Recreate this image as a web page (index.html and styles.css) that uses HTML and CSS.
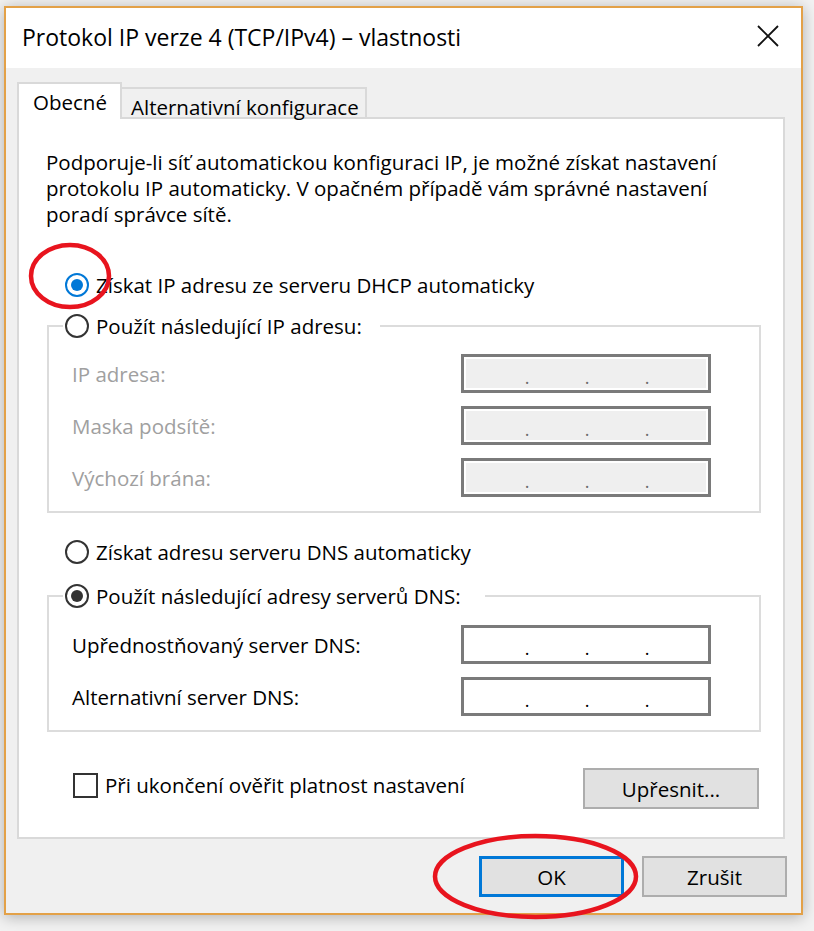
FILE: index.html
```html
<!DOCTYPE html>
<html lang="cs">
<head>
<meta charset="utf-8">
<title>Protokol IP verze 4 (TCP/IPv4) – vlastnosti</title>
<link rel="stylesheet" href="styles.css">
</head>
<body>
<div class="window">
  <div class="titlebar">
    <span class="title">Protokol IP verze 4 (TCP/IPv4) – vlastnosti</span>
    <svg class="close" width="22" height="22" viewBox="0 0 22 22"><path d="M1 1 L21 21 M21 1 L1 21" stroke="#111" stroke-width="1.8" fill="none"/></svg>
  </div>
  <div class="client">
    <div class="tabs">
      <div class="tab active">Obecné</div>
      <div class="tab">Alternativní konfigurace</div>
    </div>
    <div class="panel">
      <p class="intro">Podporuje-li síť automatickou konfiguraci IP, je možné získat nastavení<br>protokolu IP automaticky. V opačném případě vám správné nastavení<br>poradí správce sítě.</p>

      <div class="radio-row first"><span class="radio sel-blue"></span><span>Získat IP adresu ze serveru DHCP automaticky</span></div>

      <fieldset class="group g-ip">
        <legend class="legend-ip"><span class="radio"></span><span>Použít následující IP adresu:</span></legend>
        <div class="field-row"><span class="lbl disabled">IP adresa:</span><span class="ipbox off"><span class="oct o1"></span><span class="dot">.</span><span class="oct"></span><span class="dot">.</span><span class="oct"></span><span class="dot">.</span></span></div>
        <div class="field-row"><span class="lbl disabled">Maska podsítě:</span><span class="ipbox off"><span class="oct o1"></span><span class="dot">.</span><span class="oct"></span><span class="dot">.</span><span class="oct"></span><span class="dot">.</span></span></div>
        <div class="field-row"><span class="lbl disabled">Výchozí brána:</span><span class="ipbox off"><span class="oct o1"></span><span class="dot">.</span><span class="oct"></span><span class="dot">.</span><span class="oct"></span><span class="dot">.</span></span></div>
      </fieldset>

      <div class="radio-row dns"><span class="radio"></span><span>Získat adresu serveru DNS automaticky</span></div>

      <fieldset class="group g-dns">
        <legend class="legend-dns"><span class="radio sel-dark"></span><span>Použít následující adresy serverů DNS:</span></legend>
        <div class="field-row"><span class="lbl">Upřednostňovaný server DNS:</span><span class="ipbox"><span class="oct o1"></span><span class="dot">.</span><span class="oct"></span><span class="dot">.</span><span class="oct"></span><span class="dot">.</span></span></div>
        <div class="field-row"><span class="lbl">Alternativní server DNS:</span><span class="ipbox"><span class="oct o1"></span><span class="dot">.</span><span class="oct"></span><span class="dot">.</span><span class="oct"></span><span class="dot">.</span></span></div>
      </fieldset>

      <div class="bottom-row">
        <div class="check-row"><span class="checkbox"></span><span>Při ukončení ověřit platnost nastavení</span></div>
        <button class="btn adv">Upřesnit...</button>
      </div>
    </div>
    <div class="dlg-buttons">
      <button class="btn default">OK</button>
      <button class="btn">Zrušit</button>
    </div>
  </div>
</div>
<svg class="annot" width="814" height="931" viewBox="0 0 814 931">
  <ellipse cx="70" cy="276" rx="39" ry="31" fill="none" stroke="#e8141e" stroke-width="4.5"/>
  <ellipse cx="535.5" cy="876.5" rx="100.5" ry="40.5" fill="none" stroke="#e8141e" stroke-width="4.5"/>
</svg>
</body>
</html>
```
FILE: styles.css
```css
* { box-sizing: border-box; }
html, body { margin: 0; padding: 0; }
body {
  width: 814px;
  height: 931px;
  background: #f2f2f2;
  font-family: "Open Sans", "Noto Sans", sans-serif;
  font-size: 20.5px;
  line-height: 26px;
  color: #000;
  position: relative;
  overflow: hidden;
}
.window {
  margin: 6px 0 0 4px;
  width: 799px;
  height: 909px;
  border: 2px solid #e3a148;
  background: #f0f0f0;
  box-shadow: 0 2px 14px rgba(0,0,0,0.28);
  display: flex;
  flex-direction: column;
}
.titlebar {
  height: 60px;
  background: #fff;
  display: flex;
  align-items: center;
  justify-content: space-between;
  padding: 0 22px 0 16px;
}
.title {
  font-size: 23px;
  margin-top: -3px;
}
.close { margin-top: -4px; }
.client {
  flex: 1;
  padding: 14px 0 0 11px;
}
.tabs {
  display: flex;
  align-items: flex-end;
  height: 35px;
}
.tab {
  border: 2px solid #d9d9d9;
  border-bottom: none;
  padding-top: 5px;
  white-space: nowrap;
}
.tab.active {
  position: relative;
  z-index: 1;
  width: 105px;
  height: 37px;
  margin-bottom: -2px;
  background: #fff;
  padding-left: 14px;
}
.tab:not(.active) {
  width: 245px;
  height: 30px;
  border-left: none;
  background: #f0f0f0;
  padding-left: 9px;
}
.panel {
  width: 768px;
  height: 722px;
  background: #fff;
  border: 2px solid #d9d9d9;
  padding: 30px 24px 0 0;
}
.intro {
  margin: 0;
  padding-left: 27px;
  white-space: nowrap;
}
.radio-row {
  display: flex;
  align-items: center;
  gap: 7px;
  height: 26px;
  padding-left: 46px;
  white-space: nowrap;
}
.radio-row.first { margin-top: 45px; }
.radio-row.dns { margin-top: 26px; }
.radio {
  width: 24px;
  height: 24px;
  flex: none;
  border: 2px solid #333;
  border-radius: 50%;
  background: #fff;
  display: flex;
  align-items: center;
  justify-content: center;
}
.radio.sel-blue { border-color: #0078d7; }
.radio.sel-blue::after,
.radio.sel-dark::after {
  content: "";
  width: 12px;
  height: 12px;
  border-radius: 50%;
  background: #0078d7;
}
.radio.sel-dark::after { background: #333; }
.group {
  margin: 0 0 0 28px;
  width: 714px;
  border: 2px solid #dcdcdc;
  padding: 15px 48px 14px 14px;
  min-width: 0;
}
.g-ip { margin-top: 15px; }
.g-dns { margin-top: 18px; padding-top: 16px; }
.group legend {
  display: flex;
  align-items: center;
  gap: 7px;
  height: 26px;
  padding: 0 18px 0 2px;
  white-space: nowrap;
}
.group legend.legend-dns { padding-right: 24px; }
.field-row {
  display: flex;
  align-items: center;
  justify-content: space-between;
  height: 39px;
  padding-left: 9px;
}
.field-row + .field-row { margin-top: 13px; }
.lbl { white-space: nowrap; }
.lbl.disabled { color: #a0a0a0; }
.ipbox {
  width: 250px;
  height: 39px;
  border: 3px solid #7a7a7a;
  background: #fff;
  display: flex;
  align-items: center;
  padding-top: 6px;
}
.ipbox.off {
  background: #efefef;
  box-shadow: inset 0 0 0 2px #fff;
}
.oct { width: 54px; }
.oct.o1 { width: 60px; }
.dot {
  width: 6px;
  text-align: center;
  font-size: 18px;
  line-height: 20px;
  color: #000;
}
.ipbox.off .dot { color: #6d6d6d; }
.bottom-row {
  display: flex;
  justify-content: space-between;
  align-items: flex-start;
  margin-top: 36px;
}
.check-row {
  display: flex;
  align-items: center;
  gap: 7px;
  height: 26px;
  margin-top: 4px;
  padding-left: 54px;
  white-space: nowrap;
}
.checkbox {
  width: 25px;
  height: 25px;
  border: 2px solid #333;
  background: #fff;
  flex: none;
}
.btn {
  font-family: inherit;
  font-size: 20.5px;
  line-height: 26px;
  color: #000;
  background: #e1e1e1;
  border: 2px solid #adadad;
  width: 145px;
  height: 41px;
  padding: 0;
  margin: 0;
}
.btn.adv { width: 176px; }
.btn.default { border: 3px solid #0078d7; }
.dlg-buttons {
  display: flex;
  justify-content: flex-end;
  gap: 18px;
  padding-right: 14px;
  margin-top: 17px;
}
.annot {
  position: absolute;
  left: 0;
  top: 0;
  pointer-events: none;
}
```
